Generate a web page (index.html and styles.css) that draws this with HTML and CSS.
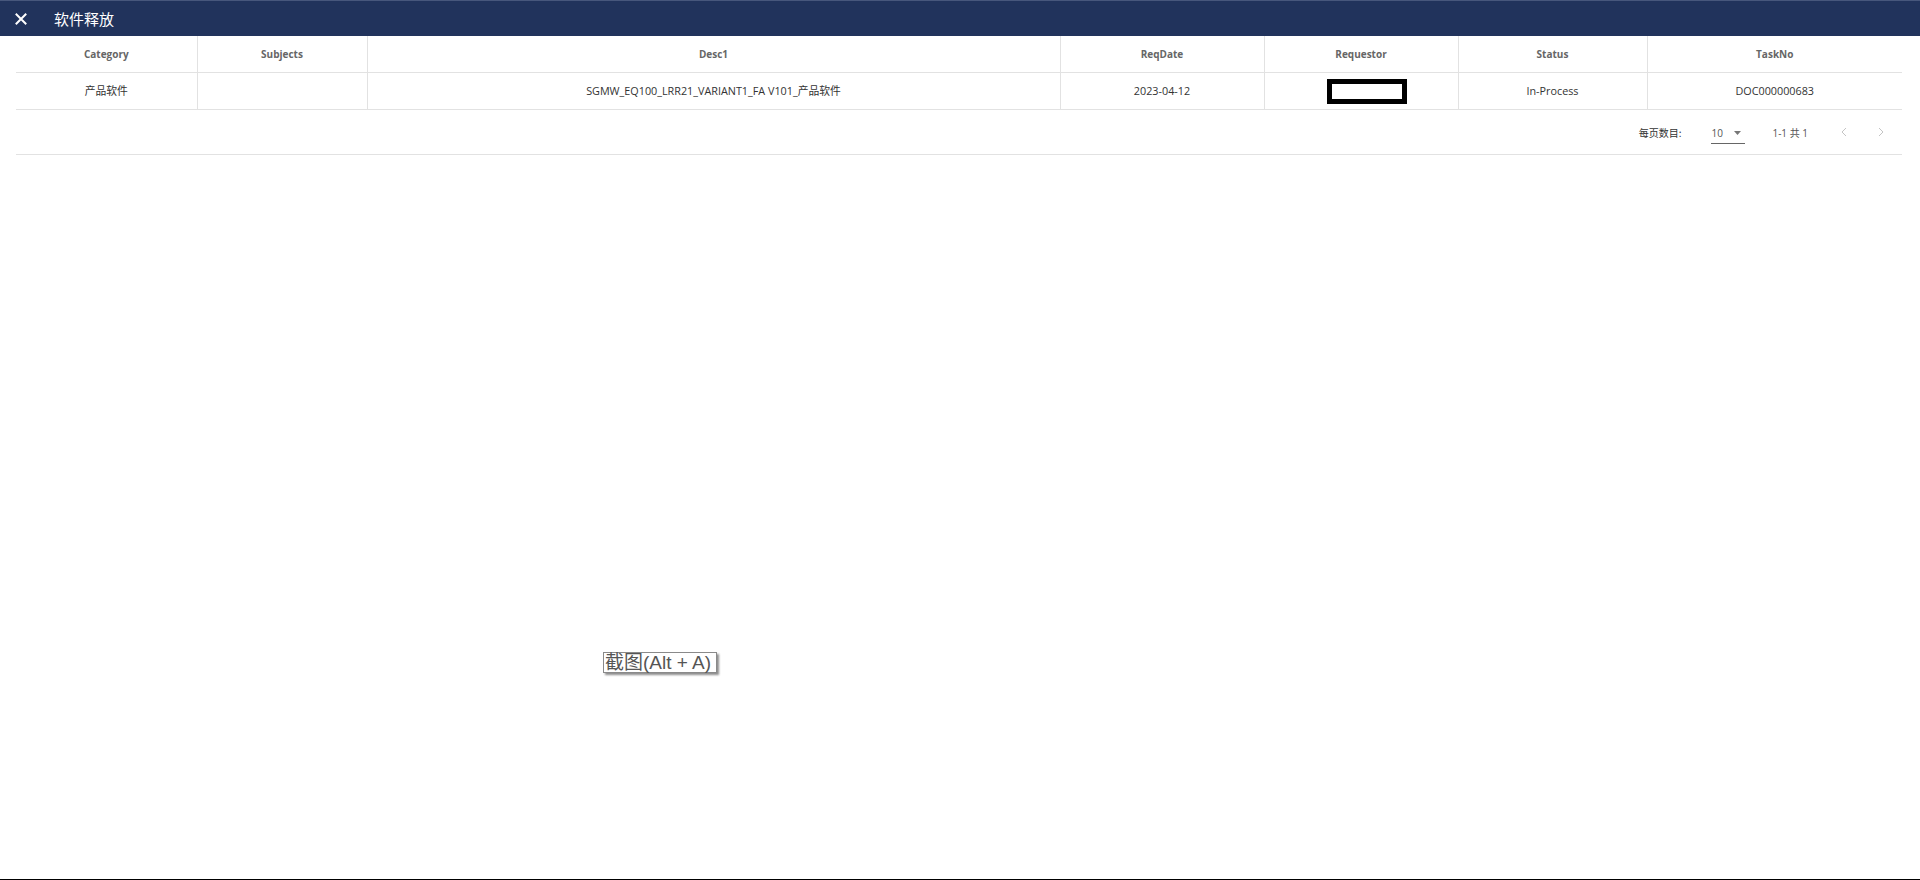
FILE: index.html
```html
<!DOCTYPE html>
<html lang="zh">
<head>
<meta charset="utf-8">
<title>软件释放</title>
<link rel="stylesheet" href="styles.css">
</head>
<body>
<div class="page">
  <header class="topbar">
    <button class="close" aria-label="close">
      <svg width="12" height="12" viewBox="0 0 12 12"><path d="M1.5 1.5L10.5 10.5M10.5 1.5L1.5 10.5" stroke="#fff" stroke-width="2" stroke-linecap="square"/></svg>
    </button>
    <h1 class="title">软件释放</h1>
  </header>
  <main class="content">
    <table class="grid">
      <colgroup>
        <col class="c-cat"><col class="c-sub"><col class="c-desc"><col class="c-date"><col class="c-req"><col class="c-status"><col class="c-task">
      </colgroup>
      <thead>
        <tr>
          <th>Category</th><th>Subjects</th><th>Desc1</th><th>ReqDate</th><th>Requestor</th><th>Status</th><th>TaskNo</th>
        </tr>
      </thead>
      <tbody>
        <tr>
          <td>产品软件</td>
          <td></td>
          <td>SGMW_EQ100_LRR21_VARIANT1_FA V101_产品软件</td>
          <td>2023-04-12</td>
          <td><span class="redact"></span></td>
          <td>In-Process</td>
          <td>DOC000000683</td>
        </tr>
      </tbody>
    </table>
    <div class="pager">
      <span class="pager-label">每页数目:</span>
      <span class="pager-select">10 <svg width="7" height="4" viewBox="0 0 7 4"><path d="M0 0H7L3.5 4Z" fill="#777"/></svg></span>
      <span class="pager-range">1-1 共 1</span>
      <button class="pager-btn" aria-label="prev"><svg width="6" height="10" viewBox="0 0 6 10"><path d="M5 1L1 5L5 9" fill="none" stroke="#c4c4c4" stroke-width="1"/></svg></button>
      <button class="pager-btn" aria-label="next"><svg width="6" height="10" viewBox="0 0 6 10"><path d="M1 1L5 5L1 9" fill="none" stroke="#c4c4c4" stroke-width="1"/></svg></button>
    </div>
  </main>
  <div class="tooltip">截图(Alt + A)</div>
</div>
</body>
</html>
```

FILE: styles.css
```css
html, body {
  margin: 0;
  padding: 0;
  background: #fff;
}

.page {
  position: relative;
  min-height: 880px;
  box-sizing: border-box;
  border-bottom: 1px solid #000;
  font-family: "Open Sans", "Noto Sans CJK SC", sans-serif;
}

.topbar {
  display: flex;
  align-items: center;
  height: 35px;
  border-top: 1px solid #47577c;
  background: #21335c;
  color: #fff;
}

.close {
  display: flex;
  align-items: center;
  justify-content: center;
  width: 30px;
  height: 30px;
  margin-left: 6px;
  padding: 0;
  border: 0;
  background: transparent;
}

.title {
  margin: 0 0 0 18px;
  font-family: "Noto Sans CJK SC", sans-serif;
  font-size: 15px;
  font-weight: 400;
  letter-spacing: 0;
}

.content {
  padding: 0 18px 0 16px;
}

.grid {
  width: 100%;
  table-layout: fixed;
  border-collapse: collapse;
}

.c-cat { width: 181px; }
.c-sub { width: 170px; }
.c-desc { width: 693px; }
.c-date { width: 204px; }
.c-req { width: 194px; }
.c-status { width: 189px; }
.c-task { width: 255px; }

.grid th,
.grid td {
  padding: 0 4px;
  text-align: center;
  border-bottom: 1px solid #e2e2e2;
  border-right: 1px solid #e2e2e2;
  white-space: nowrap;
  overflow: hidden;
}

.grid th:last-child,
.grid td:last-child {
  border-right: 0;
}

.grid th {
  height: 36px;
  font-size: 10px;
  font-weight: 700;
  color: #666;
}

.grid td {
  height: 34px;
  padding-bottom: 2px;
  font-size: 10.8px;
  color: #333;
}

.redact {
  display: inline-block;
  vertical-align: middle;
  width: 70px;
  height: 15px;
  margin-left: 12px;
  margin-top: 2px;
  border: 5px solid #000;
  background: #fff;
}

.pager {
  display: flex;
  align-items: center;
  justify-content: flex-end;
  height: 44px;
  border-bottom: 1px solid #e2e2e2;
  font-size: 10px;
  color: #333;
  padding-right: 9px;
}

.pager-label {
  font-family: "Noto Sans CJK SC", sans-serif;
  margin-right: 30px;
}

.pager-select {
  display: flex;
  align-items: center;
  justify-content: space-between;
  box-sizing: border-box;
  width: 34px;
  height: 22px;
  padding-top: 1px;
  border-bottom: 1px solid #666;
  margin-top: 2px;
  color: #555;
}

.pager-select svg {
  margin-right: 4px;
}

.pager-range {
  margin-left: 27px;
  margin-right: 11px;
  color: #555;
}

.pager-btn {
  display: flex;
  align-items: center;
  justify-content: center;
  width: 24px;
  height: 24px;
  margin-left: 13px;
  padding: 0;
  border: 0;
  background: transparent;
}

.tooltip {
  position: absolute;
  left: 603px;
  top: 652px;
  height: 21px;
  box-sizing: border-box;
  padding: 0 5px 0 1px;
  border: 1px solid #8a8a8a;
  background: #fff;
  box-shadow: 2px 2px 2px rgba(0, 0, 0, 0.45);
  font-family: "Liberation Sans", "Noto Sans CJK SC", sans-serif;
  font-size: 19px;
  line-height: 19px;
  color: #555;
  white-space: nowrap;
}
```
